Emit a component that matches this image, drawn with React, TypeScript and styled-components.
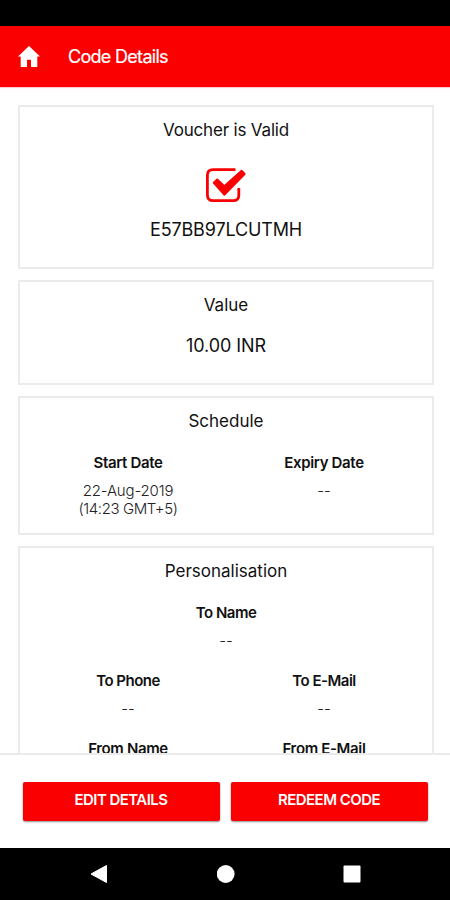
import React from "react";
import styled, { createGlobalStyle } from "styled-components";

const GlobalStyle = createGlobalStyle`
  * { box-sizing: border-box; }
  body { margin: 0; background: #fff; }
`;

const Screen = styled.div`
  width: 450px;
  height: 900px;
  display: flex;
  flex-direction: column;
  overflow: hidden;
  background: #fff;
  color: #111;
  font-family: Inter, "Liberation Sans", sans-serif;
`;

const StatusBar = styled.div`
  flex: 0 0 26px;
  background: #000;
`;

const Header = styled.header`
  flex: 0 0 61px;
  display: flex;
  align-items: center;
  padding-left: 18px;
  background: #fa0000;
  color: #fff;
  box-shadow: 0 1px 1px #fcc;
`;

const HeaderTitle = styled.h1`
  margin: 0 0 0 28px;
  font-size: 18px;
  line-height: 24px;
  font-weight: 400;
  letter-spacing: -0.7px;
  -webkit-text-stroke: 0.2px #fff;
`;

const Content = styled.main`
  flex: 1 1 0;
  min-height: 0;
  overflow: hidden;
  display: flex;
  flex-direction: column;
  gap: 11px;
  padding: 18px 16px 0 18px;
`;

const Card = styled.section<{ $height: number }>`
  flex: 0 0 ${(p) => p.$height}px;
  display: flex;
  flex-direction: column;
  align-items: center;
  padding-top: 11px;
  border: 2px solid #ebebeb;
`;

const CardTitle = styled.h2<{ $tracking?: number }>`
  margin: 0;
  font-size: 17px;
  line-height: 24px;
  font-weight: 400;
  letter-spacing: ${(p) => p.$tracking ?? 0}px;
`;

const MainValue = styled.div<{ $gap: number; $tracking: number }>`
  margin-top: ${(p) => p.$gap}px;
  font-size: 18px;
  line-height: 24px;
  letter-spacing: ${(p) => p.$tracking}px;
`;

const CheckIcon = styled.svg`
  margin-top: 24px;
  width: 42px;
  height: 38px;
`;

const Fields = styled.div<{ $gap: number }>`
  align-self: stretch;
  margin-top: ${(p) => p.$gap}px;
  display: grid;
  grid-template-columns: 196px 196px;
  justify-content: center;
  row-gap: 21px;
  text-align: center;
`;

const Field = styled.div<{ $wide?: boolean }>`
  grid-column: ${(p) => (p.$wide ? "1 / -1" : "auto")};
`;

const Label = styled.div<{ $tracking?: number }>`
  font-size: 15px;
  line-height: 20px;
  font-weight: 600;
  letter-spacing: ${(p) => p.$tracking ?? -0.35}px;
`;

const FieldValue = styled.div`
  margin-top: 9px;
  font-size: 15px;
  line-height: 18px;
  font-weight: 300;
  color: #222;
`;

const DateLine = styled.div<{ $tracking: number }>`
  letter-spacing: ${(p) => p.$tracking}px;
`;

const Actions = styled.footer`
  flex: 0 0 95px;
  display: flex;
  gap: 11px;
  padding: 27px 22px 0 23px;
  border-top: 2px solid #ebebeb;
  background: #fff;
`;

const ActionButton = styled.button<{ $tracking: number }>`
  flex: 1 1 0;
  height: 39px;
  padding: 0 1px 3px 0;
  border: 0;
  border-radius: 2px;
  background: #fa0000;
  color: #fff;
  box-shadow: 0 1px 2px rgba(0, 0, 0, 0.45);
  font: 600 15px/20px Inter, "Liberation Sans", sans-serif;
  letter-spacing: ${(p) => p.$tracking}px;
`;

const NavBar = styled.nav`
  flex: 0 0 52px;
  display: flex;
  justify-content: space-between;
  align-items: center;
  padding: 0 89px 0 90px;
  background: #000;
`;

const HomeIcon = () => (
  <svg width="22" height="22" viewBox="0 0 22 22" fill="#fff">
    <path d="M11 0 22 10.4H19.3V21H13V13.7H9V21H2.7V10.4H0Z" />
  </svg>
);

const NavIcon = ({ children }: { children: React.ReactNode }) => (
  <svg width="18" height="18" viewBox="0 0 18 18" fill="#fff">
    {children}
  </svg>
);

export default function App() {
  return (
    <>
      <GlobalStyle />
      <Screen>
        <StatusBar />
        <Header>
          <HomeIcon />
          <HeaderTitle>Code Details</HeaderTitle>
        </Header>
        <Content>
          <Card $height={164}>
            <CardTitle $tracking={-0.18}>Voucher is Valid</CardTitle>
            <CheckIcon viewBox="0 0 42 38" fill="none" stroke="#fa0000">
              <path
                d="M30.5 3.6H8Q2.4 3.6 2.4 9.2V29Q2.4 34.7 8 34.7H28.3Q33.8 34.7 33.8 29.2V22"
                strokeWidth="2.8"
              />
              <path
                d="M8.8 16.8 12.2 13.6 19.3 20.2 36.6 4.8 39.6 8 19.3 28.7Z"
                fill="#fa0000"
                strokeWidth="2"
                strokeLinejoin="round"
              />
            </CheckIcon>
            <MainValue $gap={14} $tracking={-0.15}>E57BB97LCUTMH</MainValue>
          </Card>
          <Card $height={105}>
            <CardTitle>Value</CardTitle>
            <MainValue $gap={17} $tracking={-0.1}>10.00 INR</MainValue>
          </Card>
          <Card $height={139}>
            <CardTitle>Schedule</CardTitle>
            <Fields $gap={20}>
              <Field>
                <Label>Start Date</Label>
                <FieldValue>
                  <DateLine $tracking={-0.15}>22-Aug-2019</DateLine>
                  <DateLine $tracking={-0.4}>(14:23 GMT+5)</DateLine>
                </FieldValue>
              </Field>
              <Field>
                <Label>Expiry Date</Label>
                <FieldValue>--</FieldValue>
              </Field>
            </Fields>
          </Card>
          <Card $height={260}>
            <CardTitle>Personalisation</CardTitle>
            <Fields $gap={20}>
              <Field $wide>
                <Label $tracking={-0.5}>To Name</Label>
                <FieldValue>--</FieldValue>
              </Field>
              <Field>
                <Label $tracking={-0.5}>To Phone</Label>
                <FieldValue>--</FieldValue>
              </Field>
              <Field>
                <Label $tracking={-0.5}>To E-Mail</Label>
                <FieldValue>--</FieldValue>
              </Field>
              <Field>
                <Label>From Name</Label>
              </Field>
              <Field>
                <Label>From E-Mail</Label>
              </Field>
            </Fields>
          </Card>
        </Content>
        <Actions>
          <ActionButton $tracking={-0.55}>EDIT DETAILS</ActionButton>
          <ActionButton $tracking={-0.55}>REDEEM CODE</ActionButton>
        </Actions>
        <NavBar>
          <NavIcon><path d="M1 9 16.5.5V17.5Z" stroke="#fff" strokeLinejoin="round" /></NavIcon>
          <NavIcon><circle cx="8.7" cy="9" r="8.9" /></NavIcon>
          <NavIcon><rect x=".5" y=".5" width="17" height="17" rx="1" /></NavIcon>
        </NavBar>
      </Screen>
    </>
  );
}
